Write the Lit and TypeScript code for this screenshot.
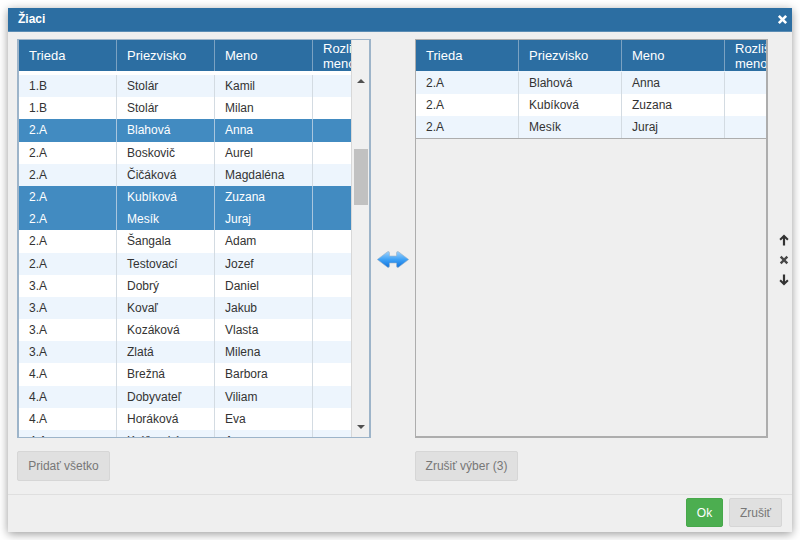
import { LitElement, html, css, svg } from "lit";
import { customElement } from "lit/decorators.js";

type Row = [string, string, string, boolean?];
const LEFT: Row[] = [
  ["1.B", "Stolár", "Kamil"],
  ["1.B", "Stolár", "Milan"],
  ["2.A", "Blahová", "Anna", true],
  ["2.A", "Boskovič", "Aurel"],
  ["2.A", "Čičáková", "Magdaléna"],
  ["2.A", "Kubíková", "Zuzana", true],
  ["2.A", "Mesík", "Juraj", true],
  ["2.A", "Šangala", "Adam"],
  ["2.A", "Testovací", "Jozef"],
  ["3.A", "Dobrý", "Daniel"],
  ["3.A", "Kovaľ", "Jakub"],
  ["3.A", "Kozáková", "Vlasta"],
  ["3.A", "Zlatá", "Milena"],
  ["4.A", "Brežná", "Barbora"],
  ["4.A", "Dobyvateľ", "Viliam"],
  ["4.A", "Horáková", "Eva"],
  ["4.A", "Kráľovská", "Anna"],
];
const RIGHT: Row[] = [
  ["2.A", "Blahová", "Anna"],
  ["2.A", "Kubíková", "Zuzana"],
  ["2.A", "Mesík", "Juraj"],
];

@customElement("app-root")
export class AppRoot extends LitElement {
  static styles = css`
    :host {
      display: block;
      width: 800px;
      height: 540px;
      padding: 8px;
      box-sizing: border-box;
      overflow: hidden;
      background: #fff;
      font-family: "Liberation Sans", Arial, sans-serif;
    }
    .dialog {
      width: 784px;
      height: 524px;
      display: flex;
      flex-direction: column;
      background: #efefef;
      box-shadow: 0 2px 9px rgba(0, 0, 0, 0.4);
    }
    .title {
      height: 24px;
      flex: none;
      box-sizing: border-box;
      background: #2c6ea2;
      border-bottom: 1px solid #5a8cb4;
      color: #fff;
      font-weight: bold;
      font-size: 12px;
      display: flex;
      align-items: center;
      justify-content: space-between;
      padding: 0 4px 2px 10px;
    }
    .title svg { display: block; margin-top: 2px; }
    .main {
      flex: 1;
      display: flex;
      padding: 7px 0 0 9px;
      min-height: 0;
    }
    .pane { display: flex; flex-direction: column; flex: none; }
    .pane.l { width: 354px; }
    .pane.r { width: 353px; }
    .mid {
      width: 44px;
      flex: none;
      height: 399px;
      display: flex;
      align-items: center;
      justify-content: center;
      padding-top: 41px;
      box-sizing: border-box;
    }
    .mid svg { display: block; margin-left: -1px; }
    .side {
      flex: 1;
      height: 399px;
      display: flex;
      flex-direction: column;
      align-items: center;
      justify-content: center;
      gap: 9px;
      padding: 43px 0 0 8px;
      box-sizing: border-box;
    }
    .side svg { display: block; }
    .box {
      height: 399px;
      box-sizing: border-box;
      position: relative;
      overflow: hidden;
    }
    .l .box { border: 2px solid #9db4c9; border-top-width: 1px; border-bottom-width: 1px; display: flex; }
    .r .box { border: 1px solid #adadad; border-bottom-width: 2px; border-right-width: 2px; }
    .tbl { flex: 1; overflow: hidden; min-width: 0; }
    .row { display: flex; font-size: 12px; color: #333; }
    .cell {
      box-sizing: border-box;
      border-right: 1px solid #d3dbe2;
      padding-left: 10px;
      white-space: nowrap;
      overflow: hidden;
      flex: none;
    }
    .head { height: 31px; background: #2c6ea2; color: #fff; font-size: 13px; box-sizing: content-box; }
    .head .cell {
      border-right: 1px solid #7ba2c2;
      display: flex;
      align-items: center;
      height: 31px;
      padding-bottom: 1px;
    }
    .head .cell.wrap {
      white-space: normal;
      line-height: 15px;
      align-items: flex-start;
      padding-top: 1px;
      padding-bottom: 0;
      overflow: hidden;
      border-right: none;
    }
    .cols-l .cell:nth-child(1) { width: 98px; }
    .cols-l .cell:nth-child(2) { width: 98px; }
    .cols-l .cell:nth-child(3) { width: 98px; }
    .cols-l .cell:nth-child(4) { width: 40px; border-right: none; }
    .cols-r .cell:nth-child(1) { width: 103px; }
    .cols-r .cell:nth-child(2) { width: 103px; }
    .cols-r .cell:nth-child(3) { width: 103px; }
    .cols-r .cell:nth-child(4) { width: 41px; border-right: none; }
    .rows-l { padding-top: 4px; background: #fff; }
    .body .row { height: 22.2px; line-height: 22.2px; background: #fff; }
    .body .row:nth-child(odd) { background: #edf5fd; }
    .body .row.sel { background: #428bc1; color: #fff; }
    .body .row.sel .cell { border-right-color: #a9c6de; }
    .rows-r { padding-top: 1px; background: #edf5fd; border-bottom: 1px solid #adadad; }
    .body.rows-r .row { height: 22px; line-height: 22px; }
    .bar {
      width: 17px;
      flex: none;
      background: #f0f0f0;
      position: relative;
      border-left: 1px solid #d8d8d8;
      box-sizing: content-box;
    }
    .thumb {
      position: absolute;
      left: 2px;
      right: 1px;
      top: 109px;
      height: 56px;
      background: #c1c1c1;
    }
    .tri { position: absolute; left: 5px; width: 0; height: 0; border-left: 4px solid transparent; border-right: 4px solid transparent; }
    .tri.up { top: 39px; border-bottom: 4px solid #505050; }
    .tri.down { bottom: 8px; border-top: 4px solid #505050; }
    .under { padding-top: 13px; display: flex; height: 43px; box-sizing: border-box; }
    button {
      font: inherit;
      font-size: 12px;
      border-radius: 2px;
      box-sizing: border-box;
      border: 1px solid #d6d6d6;
      background: #e0e0e0;
      color: #777;
      padding: 0;
      height: 30px;
    }
    .add { width: 93px; }
    .clear { width: 103px; }
    .foot {
      height: 38px;
      flex: none;
      box-sizing: border-box;
      border-top: 1px solid #dfdfdf;
      margin-top: 13px;
      display: flex;
      justify-content: flex-end;
      align-items: flex-start;
      gap: 6px;
      padding: 3px 10px 0 0;
    }
    .ok { width: 37px; height: 29px; background: #4cae50; border-color: #47a84b; color: #fff; }
    .cancel { width: 53px; height: 29px; }
  `;

  private headRow() {
    return html`<div class="row head">
      <div class="cell">Trieda</div>
      <div class="cell">Priezvisko</div>
      <div class="cell">Meno</div>
      <div class="cell wrap">Rozlišovacie meno</div>
    </div>`;
  }

  private bodyRows(rows: Row[]) {
    return rows.map(
      (r) => html`<div class="row ${r[3] ? "sel" : ""}">
        <div class="cell">${r[0]}</div>
        <div class="cell">${r[1]}</div>
        <div class="cell">${r[2]}</div>
        <div class="cell"></div>
      </div>`
    );
  }

  private arrows() {
    return html`<svg width="32" height="17" viewBox="0 0 32 17">
      <defs>
        <linearGradient id="g" x1="0" y1="0" x2="0" y2="1">
          <stop offset="0" stop-color="#9ed2fb" />
          <stop offset="0.5" stop-color="#3fa2f6" />
          <stop offset="1" stop-color="#1273dc" />
        </linearGradient>
      </defs>
      <path
        d="M0.3 8.5 L10.5 0.8 Q12.5 0 12.5 2 V5 H19.5 V2 Q19.5 0 21.5 0.8 L31.7 8.5 L21.5 16.2 Q19.5 17 19.5 15 V12 H12.5 V15 Q12.5 17 10.5 16.2 Z"
        fill="url(#g)"
        stroke="#9db2c6"
        stroke-width="0.6"
      />
    </svg>`;
  }

  private upIcon(rot = 0) {
    return html`<svg width="12" height="12" viewBox="0 0 12 12">
      ${svg`<path transform="rotate(${rot} 6 6)" d="M6 0.5 L10.6 5.1 L9.2 6.5 L7.1 4.4 V11.5 H4.9 V4.4 L2.8 6.5 L1.4 5.1 Z" fill="#333" />`}
    </svg>`;
  }

  private xIcon(color: string, size: number) {
    return html`<svg width=${size} height=${size} viewBox="0 0 12 12">
      <path d="M3 1 L6 4 L9 1 L11 3 L8 6 L11 9 L9 11 L6 8 L3 11 L1 9 L4 6 L1 3 Z" fill=${color} />
    </svg>`;
  }

  render() {
    return html`<div class="dialog">
      <div class="title"><span>Žiaci</span>${this.xIcon("#fff", 11)}</div>
      <div class="main">
        <div class="pane l">
          <div class="box">
            <div class="tbl cols-l">
              ${this.headRow()}
              <div class="body rows-l">${this.bodyRows(LEFT)}</div>
            </div>
            <div class="bar">
              <div class="tri up"></div>
              <div class="thumb"></div>
              <div class="tri down"></div>
            </div>
          </div>
          <div class="under"><button class="add">Pridať všetko</button></div>
        </div>
        <div class="mid">${this.arrows()}</div>
        <div class="pane r">
          <div class="box">
            <div class="tbl cols-r">
              ${this.headRow()}
              <div class="body rows-r">${this.bodyRows(RIGHT)}</div>
            </div>
          </div>
          <div class="under"><button class="clear">Zrušiť výber (3)</button></div>
        </div>
        <div class="side">
          ${this.upIcon()} ${this.xIcon("#484848", 10)} ${this.upIcon(180)}
        </div>
      </div>
      <div class="foot">
        <button class="ok">Ok</button>
        <button class="cancel">Zrušiť</button>
      </div>
    </div>`;
  }
}
